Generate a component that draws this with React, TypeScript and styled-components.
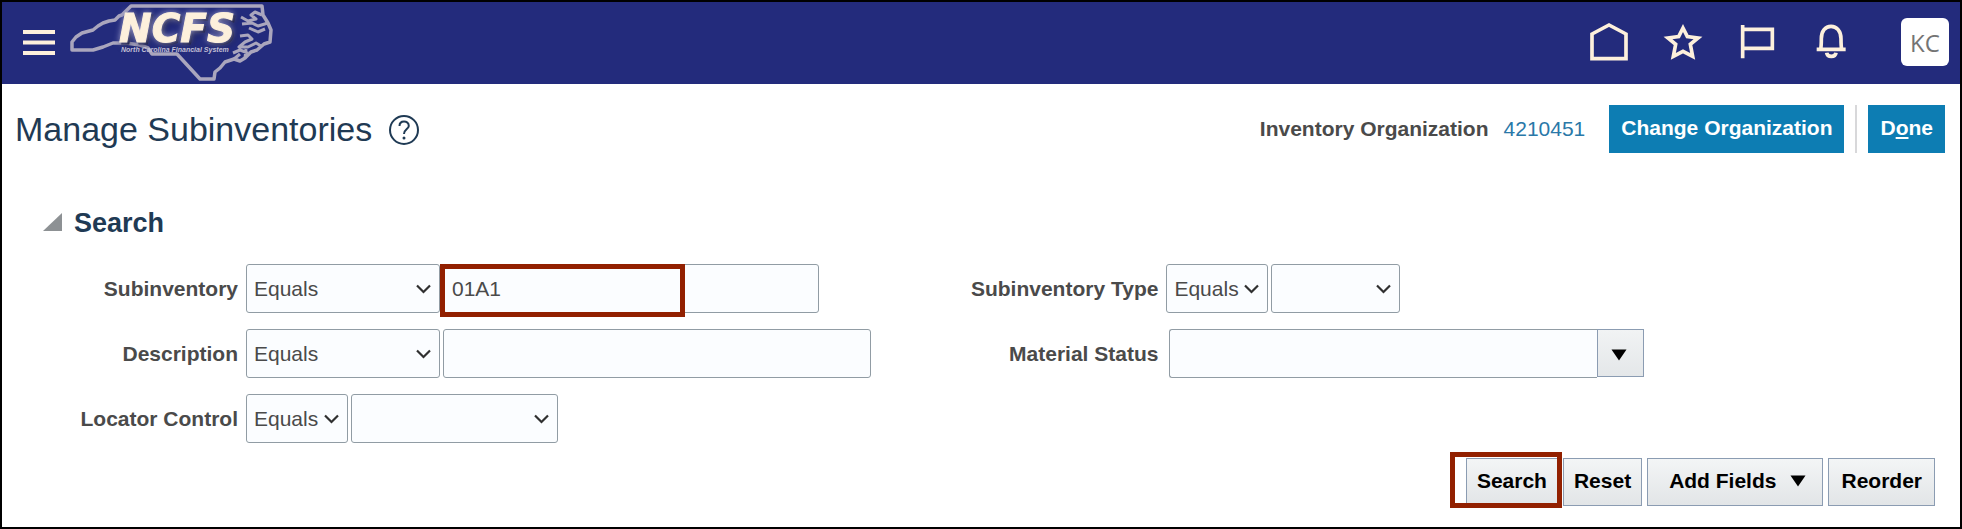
import React from "react";
import styled, { createGlobalStyle, css } from "styled-components";

const cream = "#fdf0dc";
const navy = "#232b7c";
const highlight = "#922000";

const GlobalStyle = createGlobalStyle`
  *, *::before, *::after { box-sizing: border-box; }
  body {
    margin: 0;
    background: #fff;
    color: #4a4a4a;
    font-family: "Liberation Sans", Arial, sans-serif;
    font-size: 21px;
  }
  button, input, select { font: inherit; color: inherit; margin: 0; }
`;

const Page = styled.div`
  min-height: 100vh;
  border: 2px solid #000;
`;

const Header = styled.header`
  display: flex;
  align-items: center;
  height: 82px;
  padding: 0 11px 2px 20px;
  background: ${navy};
`;

const IconButton = styled.button`
  display: flex;
  padding: 0;
  border: 0;
  background: none;
  cursor: pointer;
`;

const LogoLink = styled.a`
  display: flex;
  margin-left: 12px;
`;

const LogoWordmark = styled.text`
  fill: ${cream};
  stroke: ${cream};
  stroke-width: 1px;
  font-family: "DejaVu Sans", sans-serif;
  font-size: 39px;
  font-style: italic;
  font-weight: 700;
  filter: drop-shadow(0 0 3px #a5a6dc) drop-shadow(2px 2px 0 #14163c);
`;

const LogoTagline = styled.text`
  fill: #c3c0d6;
  font-family: "Liberation Sans", sans-serif;
  font-size: 7px;
  font-style: italic;
  font-weight: 700;
`;

const HeaderTools = styled.nav`
  display: flex;
  align-items: center;
  gap: 34px;
  margin-left: auto;
`;

const Avatar = styled.button`
  width: 48px;
  height: 48px;
  margin-left: 16px;
  padding: 0;
  border: 0;
  border-radius: 6px;
  background: #fff;
  && {
    color: #747474;
    font-family: "Open Sans", sans-serif;
    font-size: 24px;
  }
`;

const TitleBar = styled.div`
  display: flex;
  align-items: center;
  padding: 21px 15px 0 13px;
`;

const Title = styled.h1`
  margin: 0 16px 0 0;
  color: #1f3a54;
  font-size: 34px;
  font-weight: 400;
  line-height: 48px;
`;

const TitleActions = styled.div`
  display: flex;
  align-items: center;
  margin-left: auto;
`;

const OrgLabel = styled.span`
  font-weight: 700;
`;

const OrgLink = styled.a`
  margin: 0 24px 0 15px;
  color: #2a78a8;
  text-decoration: none;
`;

const PrimaryButton = styled.button`
  height: 48px;
  padding: 0 12px 2px;
  border: 0;
  background: #0d7db3;
  && {
    color: #fff;
    font-weight: 700;
  }
`;

const Divider = styled.span`
  width: 2px;
  height: 48px;
  margin: 0 11px;
  background: #d8d8da;
`;

const SearchPanel = styled.form`
  padding: 54px 25px 0 41px;
`;

const PanelHeading = styled.h2`
  display: flex;
  align-items: center;
  gap: 11px;
  margin: 0 0 25px;
  color: #1f3a54;
  font-size: 27px;
  line-height: 32px;
`;

const Fields = styled.div`
  display: grid;
  grid-template-columns: 18fr 19fr;
`;

const FieldColumn = styled.div`
  display: flex;
  flex-direction: column;
  gap: 16px;
`;

const FieldRow = styled.div`
  display: flex;
  align-items: center;
  height: 49px;
`;

const FieldLabel = styled.label`
  width: 195px;
  margin-right: 8px;
  font-weight: 700;
  text-align: right;
`;

const Controls = styled.div`
  display: flex;
  gap: 3px;
`;

const boxed = css`
  width: 100%;
  height: 49px;
  border: 1px solid #919ca4;
  border-radius: 3px;
  background: #fbfdff;
`;

const SelectShell = styled.span<{ $width: number }>`
  display: grid;
  align-items: center;
  width: ${(p) => p.$width}px;
  > * { grid-area: 1 / 1; }
  > svg {
    justify-self: end;
    margin-right: 8px;
    pointer-events: none;
  }
`;

const NativeSelect = styled.select`
  ${boxed}
  appearance: none;
  padding: 0 24px 0 7px;
`;

const InputShell = styled.span<{ $width: number }>`
  position: relative;
  display: block;
  width: ${(p) => p.$width}px;
`;

const TextInput = styled.input`
  ${boxed}
  padding: 0 8px;
`;

const InputHighlight = styled.span`
  position: absolute;
  top: 0;
  left: -3px;
  width: 245px;
  height: 53px;
  border: 5px solid ${highlight};
  pointer-events: none;
`;

const Combo = styled.div`
  display: flex;
  margin-left: 3px;
`;

const ComboInput = styled(TextInput)`
  width: 428px;
  border-right: 0;
  border-radius: 3px 0 0 3px;
`;

const ComboButton = styled.button`
  display: flex;
  align-items: center;
  justify-content: center;
  width: 47px;
  height: 48px;
  padding: 3px 4px 0 0;
  border: 1px solid #8b9cb2;
  background: linear-gradient(#f1f3f4, #e4e7e9);
`;

const Actions = styled.div`
  display: flex;
  justify-content: flex-end;
  gap: 5px;
  margin-top: 15px;
`;

const Highlighted = styled.span`
  position: relative;
  display: flex;
`;

const ButtonHighlight = styled.span`
  position: absolute;
  inset: -6px -4px -2px -16px;
  border: 5px solid ${highlight};
  pointer-events: none;
`;

const ActionButton = styled.button<{ $wide?: boolean }>`
  display: flex;
  align-items: center;
  gap: 14px;
  height: 48px;
  padding: 0 ${(p) => (p.$wide ? 12 : 10)}px 2px;
  border: 1px solid #8b9cb2;
  background: linear-gradient(#f3f5f6, #e2e5e7);
  && {
    color: #000;
    font-weight: 700;
  }
`;

const MenuButton = styled(ActionButton)`
  padding: 0 16px 2px 21px;
`;

const MenuIcon = () => (
  <svg width="34" height="28" viewBox="0 0 34 28" stroke={cream} strokeWidth="4">
    <path d="M1 4H33M1 14.500H33M1 25H33" />
  </svg>
);

const Logo = () => (
  <svg width="206" height="82" viewBox="0 0 206 82" role="img" aria-label="NCFS North Carolina Financial System">
    <g fill="none" stroke="#aaa6bd" strokeLinejoin="round">
      <path
        strokeWidth="3.500"
        d="M63 5H194L195 14L200 22L203 29L202 41L196 43L189 49L183 51L177 57L172 60L166 58L157 61L152 67L147 71L146 78H132L109 53H84L80 47L72 44L58 42L45 42L35 46L25 49H4V41L8 36L14 32L25 29L30 25L35 22L41 20L47 19L51 15L54 14L59 9Z"
      />
      <path
        strokeWidth="3"
        d="M194 14L187 11L183 14L188 18L180 20L173 16M200 22L190 25L184 22L174 23M197 28L190 31L181 27M172 35L180 34L184 38L177 41L171 46L180 46L188 42L193 45M165 52L172 49L180 52M177 57L178 48M166 58L172 53"
      />
    </g>
    <LogoWordmark x="51" y="41">NCFS</LogoWordmark>
    <LogoTagline x="53" y="51">North Carolina Financial System</LogoTagline>
  </svg>
);

const toolIcons = [
  { label: "Home", path: "M9 36L60 9L111 36V110H9Z" },
  { label: "Favorites", path: "M60 18L73 44L105 48L82 67L89 103L60 88L31 103L38 67L15 48L47 44Z" },
  { label: "Watchlist", path: "M17 9V109M17 22H106V79H17" },
  { label: "Notifications", path: "M17 82H104M29 82C31 72 31 65 31 50C31 27 43 13 60 13S90 27 90 50C90 65 90 72 92 82M47 92C49 107 73 107 75 92" },
];

const ToolIcon = ({ path }: { path: string }) => (
  <svg width="40" height="40" viewBox="0 0 120 120" fill="none" stroke={cream} strokeWidth="11">
    <path d={path} />
  </svg>
);

const HelpIcon = () => (
  <svg width="32" height="32" viewBox="0 0 32 32" fill="none" stroke="#1f3a54" strokeWidth="2">
    <circle cx="16" cy="17" r="14" />
    <path d="M11.500 13C11.500 10 13.500 8.500 16 8.500S20.800 10 20.800 13C20.800 16 16 16.500 16 21" />
    <circle cx="16" cy="25" r="1.500" fill="#1f3a54" stroke="none" />
  </svg>
);

const DisclosureIcon = () => (
  <svg width="20" height="20" viewBox="0 0 20 20" fill="#8d9194">
    <path d="M19 0V18H0Z" />
  </svg>
);

const Chevron = () => (
  <svg width="16" height="10" viewBox="0 0 16 10" fill="none" stroke="#303030" strokeWidth="2.200">
    <path d="M1 1.500L7.500 8L14 1.500" />
  </svg>
);

const DownTriangle = () => (
  <svg width="16" height="12" viewBox="0 0 16 12">
    <path d="M0.500 0.500H15.500L8 11.500Z" fill="#000" />
  </svg>
);

type SelectProps = { id?: string; label?: string; width: number; value?: string };

const Select = ({ id, label, width, value = "" }: SelectProps) => (
  <SelectShell $width={width}>
    <NativeSelect id={id} aria-label={label} defaultValue={value}>
      <option value={value}>{value}</option>
    </NativeSelect>
    <Chevron />
  </SelectShell>
);

export default function App() {
  return (
    <Page>
      <GlobalStyle />
      <Header>
        <IconButton type="button" aria-label="Navigator"><MenuIcon /></IconButton>
        <LogoLink href="#"><Logo /></LogoLink>
        <HeaderTools>
          {toolIcons.map((icon) => (
            <IconButton key={icon.label} type="button" aria-label={icon.label}>
              <ToolIcon path={icon.path} />
            </IconButton>
          ))}
          <Avatar type="button">KC</Avatar>
        </HeaderTools>
      </Header>

      <main>
        <TitleBar>
          <Title>Manage Subinventories</Title>
          <IconButton type="button" aria-label="Help"><HelpIcon /></IconButton>
          <TitleActions>
            <OrgLabel>Inventory Organization</OrgLabel>
            <OrgLink href="#">4210451</OrgLink>
            <PrimaryButton type="button">Change Organization</PrimaryButton>
            <Divider />
            <PrimaryButton type="button">D<u>o</u>ne</PrimaryButton>
          </TitleActions>
        </TitleBar>

        <SearchPanel onSubmit={(e) => e.preventDefault()}>
          <PanelHeading><DisclosureIcon />Search</PanelHeading>
          <Fields>
            <FieldColumn>
              <FieldRow>
                <FieldLabel htmlFor="subinventory">Subinventory</FieldLabel>
                <Controls>
                  <Select label="Subinventory operator" width={194} value="Equals" />
                  <InputShell $width={376}>
                    <TextInput id="subinventory" type="text" defaultValue="01A1" />
                    <InputHighlight />
                  </InputShell>
                </Controls>
              </FieldRow>
              <FieldRow>
                <FieldLabel htmlFor="description">Description</FieldLabel>
                <Controls>
                  <Select label="Description operator" width={194} value="Equals" />
                  <InputShell $width={428}>
                    <TextInput id="description" type="text" />
                  </InputShell>
                </Controls>
              </FieldRow>
              <FieldRow>
                <FieldLabel htmlFor="locator">Locator Control</FieldLabel>
                <Controls>
                  <Select label="Locator Control operator" width={102} value="Equals" />
                  <Select id="locator" width={207} />
                </Controls>
              </FieldRow>
            </FieldColumn>
            <FieldColumn>
              <FieldRow>
                <FieldLabel htmlFor="subtype">Subinventory Type</FieldLabel>
                <Controls>
                  <Select label="Subinventory Type operator" width={102} value="Equals" />
                  <Select id="subtype" width={129} />
                </Controls>
              </FieldRow>
              <FieldRow>
                <FieldLabel htmlFor="status">Material Status</FieldLabel>
                <Combo>
                  <ComboInput id="status" type="text" />
                  <ComboButton type="button" aria-label="Show material statuses"><DownTriangle /></ComboButton>
                </Combo>
              </FieldRow>
            </FieldColumn>
          </Fields>
          <Actions>
            <Highlighted>
              <ActionButton type="submit">Search</ActionButton>
              <ButtonHighlight />
            </Highlighted>
            <ActionButton type="reset">Reset</ActionButton>
            <MenuButton type="button">Add Fields<DownTriangle /></MenuButton>
            <ActionButton type="button" $wide>Reorder</ActionButton>
          </Actions>
        </SearchPanel>
      </main>
    </Page>
  );
}
